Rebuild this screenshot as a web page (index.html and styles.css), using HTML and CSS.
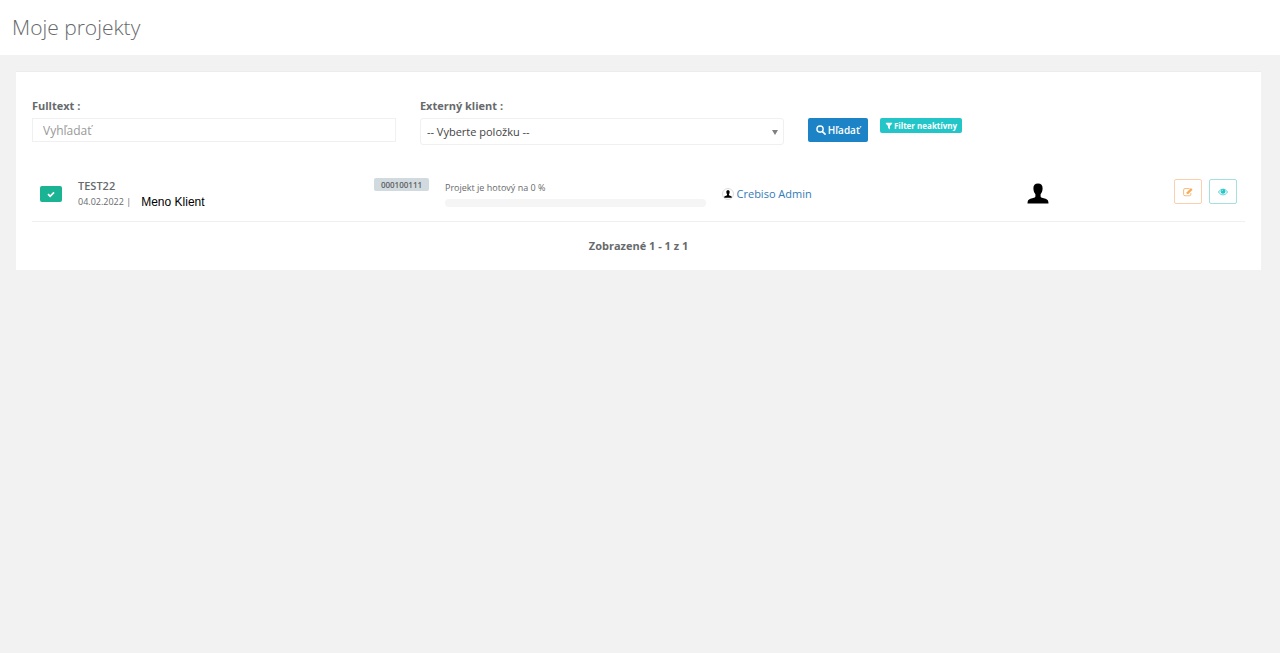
FILE: index.html
```html
<!DOCTYPE html>
<html lang="sk">
<head>
    <meta charset="UTF-8">
    <title>Moje projekty</title>
    <link rel="stylesheet" href="styles.css">
</head>
<body>
    <header class="page-heading">
        <h1>Moje projekty</h1>
    </header>
    <main class="card">
        <form class="filter-form">
            <div class="form-group">
                <label for="fulltext">Fulltext :</label>
                <input type="text" id="fulltext" class="form-control" placeholder="Vyhľadať">
            </div>
            <div class="form-group">
                <label for="client">Externý klient :</label>
                <div class="select-wrap">
                    <select id="client" class="form-select">
                        <option>-- Vyberte položku --</option>
                    </select>
                </div>
            </div>
            <div class="form-buttons">
                <button type="submit" class="btn btn-search">
                    <svg class="icon" viewBox="0 0 16 16"><circle cx="6.5" cy="6.5" r="5" fill="none" stroke="currentColor" stroke-width="2.2"/><path d="M10.500 10.500l4 4" stroke="currentColor" stroke-width="2.600" stroke-linecap="round"/></svg>
                    Hľadať
                </button>
                <button type="button" class="btn btn-filter">
                    <svg class="icon-small" viewBox="0 0 14 14"><path d="M1.500 1.500h11v1.500L8.700 7.200V13L5.300 10.500V7.200L1.500 3z" fill="currentColor"/></svg>
                    Filter neaktívny
                </button>
            </div>
        </form>
        <table class="project-table">
            <tbody>
                <tr>
                    <td class="col-status">
                        <button type="button" class="btn btn-status" aria-label="Aktívny">
                            <svg class="icon-small" viewBox="0 0 14 14"><path d="M1.800 7.200l3.700 3.700L12.300 4" fill="none" stroke="currentColor" stroke-width="3"/></svg>
                        </button>
                    </td>
                    <td class="col-title">
                        <a href="#" class="project-name">TEST22</a>
                        <div class="project-info">
                            <small>04.02.2022 |</small>
                            <span class="client-name">Meno Klient</span>
                        </div>
                    </td>
                    <td class="col-code"><span class="badge">000100111</span></td>
                    <td class="col-progress">
                        <small>Projekt je hotový na 0 %</small>
                        <div class="progress"></div>
                    </td>
                    <td class="col-owner">
                        <a href="#" class="owner">
                            <span class="owner-photo"><svg viewBox="0 0 22 21"><path d="M11 0.500c-3.200 0-4.600 1.700-4.600 4.800 0 2.700.8 4.500 2 5.900v2c0 .8-.5 1.200-1.400 1.500l-3.600 1.100C1.300 16.500.5 17.800.5 20.500h21c0-2.700-.8-4-2.900-4.700L15 14.700c-.9-.3-1.400-.7-1.400-1.500v-2c1.200-1.400 2-3.200 2-5.900 0-3.100-1.400-4.800-4.600-4.800z"/></svg></span>
                            Crebiso Admin
                        </a>
                    </td>
                    <td class="col-avatar">
                        <svg class="avatar" viewBox="0 0 22 21"><path d="M11 0.500c-3.200 0-4.600 1.700-4.600 4.800 0 2.700.8 4.500 2 5.900v2c0 .8-.5 1.200-1.400 1.500l-3.600 1.100C1.300 16.500.5 17.800.5 20.500h21c0-2.700-.8-4-2.900-4.700L15 14.700c-.9-.3-1.400-.7-1.400-1.500v-2c1.200-1.400 2-3.200 2-5.900 0-3.100-1.400-4.800-4.600-4.800z"/></svg>
                    </td>
                    <td class="col-actions">
                        <div class="actions">
                            <button type="button" class="btn btn-action btn-edit" aria-label="Upraviť">
                                <svg class="icon" viewBox="0 0 16 16" fill="none" stroke="currentColor"><path d="M10.500 2.500H3.200A2.200 2.200 0 0 0 1 4.700v7.100A2.200 2.200 0 0 0 3.200 14h7.100a2.200 2.200 0 0 0 2.200-2.200V9.500" stroke-width="1.300"/><path d="M6 11V8.500L12.800 1.700l2.500 2.500L8.500 11z" fill="currentColor" stroke="none"/></svg>
                            </button>
                            <button type="button" class="btn btn-action btn-view" aria-label="Zobraziť">
                                <svg class="icon" viewBox="0 0 16 16"><path d="M.8 8C4.500 1.900 11.500 1.900 15.200 8 11.500 14.100 4.500 14.100.8 8z" fill="none" stroke="currentColor" stroke-width="1.200"/><circle cx="8" cy="7" r="3.900" fill="currentColor"/><path d="M6 7a2 2 0 0 1 2-2" fill="none" stroke="#fff" stroke-width=".8"/></svg>
                            </button>
                        </div>
                    </td>
                </tr>
            </tbody>
        </table>
        <div class="summary">Zobrazené 1 - 1 z 1</div>
    </main>
</body>
</html>
```
FILE: styles.css
```css
* {
    box-sizing: border-box;
}
body {
    font-family: "Open Sans", "Noto Sans", sans-serif;
    font-size: 11px;
    line-height: 16px;
    margin: 0;
    color: #676a6c;
    background-color: #f2f2f2;
}
.page-heading {
    background-color: #ffffff;
    padding: 12px;
    margin-bottom: 16px;
}
.page-heading h1 {
    margin: 0;
    font-size: 21px;
    line-height: 31px;
    font-weight: 300;
}
.card {
    background-color: #ffffff;
    border-top: 1px solid #ececec;
    margin: 0 19px 0 16px;
    padding: 26px 16px 16px;
}
.filter-form {
    display: flex;
    align-items: flex-start;
    gap: 24px;
}
.form-group {
    width: 30%;
}
.form-group label {
    display: block;
    font-weight: 700;
    margin-bottom: 4px;
}
.form-control, .form-select {
    display: block;
    width: 100%;
    border: 1px solid #f0f0f0;
    background-color: #ffffff;
    font-family: inherit;
    font-size: 12px;
}
.form-control {
    height: 24px;
    padding: 0 10px;
}
.form-control::placeholder {
    color: #999999;
}
.select-wrap {
    position: relative;
}
.form-select {
    height: 27px;
    padding: 0 6px;
    border-radius: 3px;
    font-size: 11px;
    color: #444444;
    appearance: none;
}
.select-wrap::after {
    content: "";
    position: absolute;
    right: 6px;
    top: 12px;
    border: 3px solid transparent;
    border-top: 5px solid #808080;
    border-bottom: 0;
    pointer-events: none;
}
.form-buttons {
    display: flex;
    align-items: flex-start;
    gap: 12px;
    padding-top: 20px;
}
.btn {
    display: flex;
    align-items: center;
    justify-content: center;
    font-family: inherit;
    border: 0;
    border-radius: 2px;
    padding: 0;
    color: #ffffff;
    cursor: pointer;
}
.icon {
    width: 10px;
    height: 10px;
}
.icon-small {
    width: 8px;
    height: 8px;
}
.btn-search {
    background-color: #1c84c6;
    height: 24px;
    padding: 0 8px;
    gap: 2px;
    font-size: 10px;
    font-weight: 600;
}
.btn-filter {
    background-color: #23c6c8;
    height: 15px;
    padding: 0 5px;
    gap: 1px;
    font-size: 8px;
    font-weight: 700;
}
.project-table {
    width: 100%;
    margin-top: 20px;
    table-layout: fixed;
    border-collapse: collapse;
    border-bottom: 1px solid #f0f0f0;
}
.project-table td {
    height: 56px;
    padding: 2px 8px 0;
    vertical-align: middle;
}
.project-table small {
    display: block;
    font-size: 9px;
}
.project-table .col-status {
    width: 38px;
    padding-right: 0;
}
.col-title {
    width: 24.4%;
}
.col-code {
    width: 71px;
}
.col-progress {
    width: 22.8%;
}
.col-owner {
    width: 25.2%;
}
.col-avatar {
    width: 5%;
}
.project-table .col-actions {
    padding: 0 8px 2px;
}
.btn-status {
    background-color: #1ab394;
    width: 22px;
    height: 16px;
}
.project-name {
    color: #676a6c;
    font-weight: 600;
    text-decoration: none;
}
.project-info {
    display: flex;
    gap: 10px;
}
.client-name {
    font-family: "Liberation Sans", Arial, sans-serif;
    font-size: 12px;
    color: #000000;
}
.badge {
    display: block;
    margin-bottom: 18px;
    background-color: #d1dade;
    border-radius: 2px;
    font-size: 8px;
    line-height: 13px;
    font-weight: 600;
    text-align: center;
    color: #5e5e5e;
}
.progress {
    height: 8px;
    margin-top: 3px;
    border-radius: 4px;
    background-color: #f5f5f5;
}
.owner {
    display: flex;
    align-items: center;
    gap: 3px;
    color: #337ab7;
    text-decoration: none;
}
.owner-photo {
    display: flex;
    align-items: center;
    justify-content: center;
    width: 12px;
    height: 12px;
    border: 1px solid #dddddd;
    border-radius: 50%;
}
.owner-photo svg {
    width: 8px;
    height: 8px;
}
.avatar {
    display: block;
    width: 22px;
    height: 21px;
}
.actions {
    display: flex;
    justify-content: flex-end;
    gap: 7px;
}
.btn-action {
    width: 28px;
    height: 25px;
    background-color: #ffffff;
    border: 1px solid;
}
.btn-edit {
    border-color: #fbd0ae;
    color: #f8ac59;
}
.btn-view {
    border-color: #a4e0e0;
    color: #23c6c8;
}
.summary {
    padding: 16px 0 0;
    text-align: center;
    font-weight: 700;
}
```
